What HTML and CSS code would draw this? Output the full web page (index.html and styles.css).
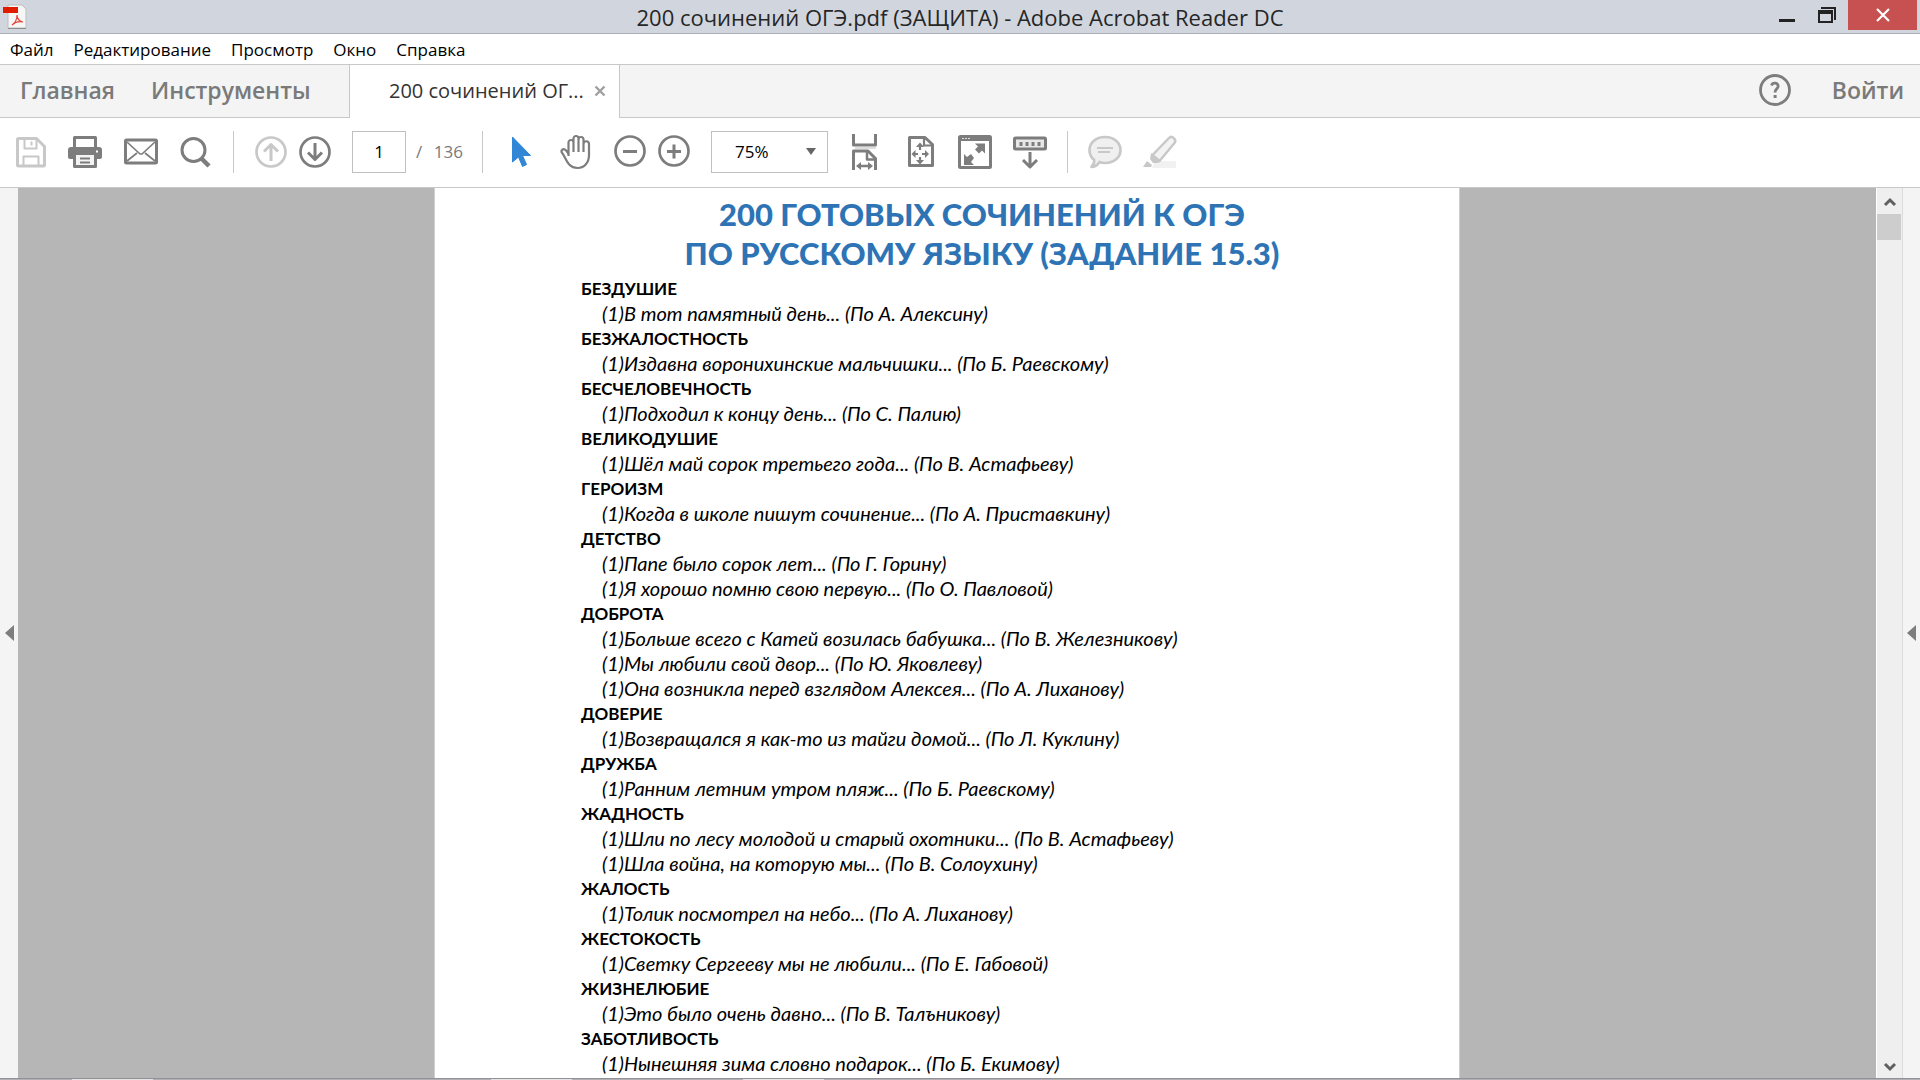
FILE: index.html
```html
<!DOCTYPE html>
<html lang="ru">
<head>
<meta charset="utf-8">
<title>200 сочинений ОГЭ.pdf (ЗАЩИТА) - Adobe Acrobat Reader DC</title>
<meta name="viewport" content="width=device-width, initial-scale=1">
<link rel="stylesheet" href="styles.css">
</head>
<body>
<div class="window">
  <header class="titlebar">
    <svg class="app-icon" viewBox="0 0 24 26" aria-hidden="true">
      <path d="M5 1h14l4 4v19H5z" fill="#f6f6f6" stroke="#bdbdbd"/>
      <path d="M5 24.500h18" stroke="#8d8d8d"/>
      <path d="M0 3h15v6H0z" fill="#e01b00"/>
      <path d="M9 21c3-2 5-6 5-10 0 4 3 7 6 7-4-1-8 0-11 3z" fill="none" stroke="#e5483a" stroke-width="1.200"/>
    </svg>
    <h1 class="window-title">200 сочинений ОГЭ.pdf (ЗАЩИТА) - Adobe Acrobat Reader DC</h1>
    <div class="window-controls">
      <button class="win-btn" aria-label="Свернуть"><svg width="20" height="24" viewBox="0 0 20 24"><path d="M2 19h16v3H2z" fill="#222"/></svg></button>
      <button class="win-btn" aria-label="Свернуть в окно"><svg width="20" height="24" viewBox="0 0 20 24"><path d="M4 7h15v13h-2V9H4z" fill="#222"/><path d="M1 10h15v13H1zM3 14v7h11v-7z" fill="#222" fill-rule="evenodd"/></svg></button>
      <button class="win-btn close" aria-label="Закрыть"><svg width="16" height="14" viewBox="0 0 16 14"><path d="M2 1l12 12M14 1L2 13" stroke="#fff" stroke-width="2.200"/></svg></button>
    </div>
  </header>

  <nav class="menubar" aria-label="Меню">
    <button>Файл</button>
    <button>Редактирование</button>
    <button>Просмотр</button>
    <button>Окно</button>
    <button>Справка</button>
  </nav>

  <div class="tabbar">
    <div class="main-tabs">
      <button class="main-tab">Главная</button>
      <button class="main-tab">Инструменты</button>
    </div>
    <div class="doc-tab">
      <span class="doc-name">200 сочинений ОГ...</span>
      <button class="tab-close" aria-label="Закрыть вкладку"><svg width="12" height="12" viewBox="0 0 12 12"><path d="M1.500 1.500l9 9M10.500 1.500l-9 9" stroke="#a0a0a0" stroke-width="2.400"/></svg></button>
    </div>
    <div class="account">
      <button class="help" aria-label="Справка"><svg width="32" height="32" viewBox="0 0 32 32" fill="none" stroke="#7d7d7d"><circle cx="16" cy="16" r="14.500" stroke-width="2.800"/><path d="M12.500 11.500c1-3.500 7.500-3 6.500 1.300-.6 2.300-3 2.600-3 5.700" stroke-width="2.800"/><path d="M14.600 21h3v3h-3z" fill="#7d7d7d" stroke="none"/></svg></button>
      <a class="login" href="#">Войти</a>
    </div>
  </div>

  <div class="toolbar" role="toolbar" aria-label="Инструменты документа">
    <button class="tool pale" aria-label="Сохранить"><svg viewBox="0 0 36 36"><path d="M5 4.500h18.500l8 8V31a1 1 0 0 1-1 1h-25a1 1 0 0 1-1-1V5.500a1 1 0 0 1 1-1z" stroke-width="3"/><path d="M11.500 5v9.500h12V5M18.500 7.500v4M10.500 32v-9.500h15V32" stroke-width="2"/></svg></button>
    <button class="tool" aria-label="Печать"><svg viewBox="0 0 36 36"><path d="M3 13h28a3 3 0 0 1 3 3v7a2 2 0 0 1-2 2H2a2 2 0 0 1-2-2v-7a3 3 0 0 1 3-3z" class="solid"/><path d="M6.500 13V3.500h21V13" stroke-width="3" fill="#fff"/><path d="M6.500 19.500h21v13h-21z" stroke-width="3" fill="#f4f4f4"/><path d="M12 24.500h10M12 28.500h10" stroke-width="2"/><path d="M28 16.500h2v2h-2z" fill="#fff" stroke="none"/></svg></button>
    <button class="tool" aria-label="Отправить"><svg viewBox="0 0 36 36"><rect x="2.500" y="6" width="31" height="23" rx="1" stroke-width="3"/><path d="M4 8l13 12h2L32 8M4 27l10-8M32 27l-10-8" stroke-width="1.700"/></svg></button>
    <button class="tool" aria-label="Найти"><svg viewBox="0 0 36 36"><circle cx="15.500" cy="16" r="11.500" stroke-width="3"/><path d="M23.500 24.500l7.500 7.500" stroke-width="4.500"/></svg></button>
    <span class="divider"></span>
    <div class="tool-pair">
      <button class="tool pale" aria-label="Предыдущая страница"><svg viewBox="0 0 36 36"><circle cx="18" cy="18" r="14.500" stroke-width="2.700"/><path d="M18 27V11M11 17.500l7-7 7 7" stroke-width="3"/></svg></button>
      <button class="tool" aria-label="Следующая страница"><svg viewBox="0 0 36 36"><circle cx="18" cy="18" r="14.500" stroke-width="2.700"/><path d="M18 9v16M11 18.500l7 7 7-7" stroke-width="3"/></svg></button>
    </div>
    <div class="page-nav">
      <input class="page-number" type="text" value="1" aria-label="Номер страницы">
      <span class="slash">/</span>
      <span class="page-total">136</span>
    </div>
    <span class="divider"></span>
    <button class="tool" aria-label="Выбор"><svg viewBox="0 0 36 36"><path d="M10.500 3v25l6-5 4 9.500 4-2-4-9H28.500z" fill="#3186d6" stroke="#3186d6" stroke-width="1"/></svg></button>
    <button class="tool" aria-label="Рука"><svg viewBox="0 0 36 36"><path d="M9.500 22V8.500a2.500 2.500 0 0 1 5 0V18M14.500 17V4.500a2.500 2.500 0 0 1 5 0V18M19.500 17V5.500a2.500 2.500 0 0 1 5 0V18M24.500 18V10a2.700 2.700 0 0 1 5.500 0V21c0 8-5 13-11.500 13-9 0-11-8-14-13-2-3-3-4-1-5.500 2.500-1.500 5 2.500 6.500 5.500" stroke-width="2.200" transform="translate(2 0)"/></svg></button>
    <div class="tool-pair">
      <button class="tool" aria-label="Уменьшить"><svg viewBox="0 0 36 36"><circle cx="18" cy="17" r="14.500" stroke-width="2.700"/><path d="M11 17.500h14" stroke-width="3"/></svg></button>
      <button class="tool" aria-label="Увеличить"><svg viewBox="0 0 36 36"><circle cx="18" cy="17" r="14.500" stroke-width="2.700"/><path d="M11 17.500h14M18 10.500v14" stroke-width="3"/></svg></button>
    </div>
    <label class="zoom">
      <select aria-label="Масштаб"><option>75%</option></select>
      <svg width="10" height="7" viewBox="0 0 10 7"><path d="M0 0h10L5 7z" fill="#666"/></svg>
    </label>
    <button class="tool" aria-label="По ширине"><svg viewBox="0 0 36 36"><path d="M6.500 0v11h22V0" stroke-width="3"/><path d="M8 14h21" stroke="#dedede" stroke-width="2"/><path d="M6.500 36V17H21l7.500 7.500V36" stroke-width="3"/><path d="M20 17v8.500h8M11 32h13" stroke-width="2.500"/><path d="M9 32l5-4v8zM26 32l-5-4v8z" class="solid"/></svg></button>
    <button class="tool" aria-label="По размеру страницы"><svg viewBox="0 0 36 36"><path d="M7.500 3.500H23l7.500 7V31.500h-23z" stroke-width="3"/><path d="M22 4v7.500h8M18 12v4M18 23v4M12 20h4M20 20h4" stroke-width="2.200"/><path d="M18 8.500l4 4.500h-8zM18 30.500l4-4.500h-8zM9.500 20l4-4v8zM27 20l-4-4v8z" class="solid"/></svg></button>
    <button class="tool" aria-label="Во весь экран"><svg viewBox="0 0 36 36"><rect x="2.500" y="2.500" width="31" height="31" rx="1" stroke-width="3"/><path d="M2 2h32v5H2z" class="solid"/><path d="M5 4.500h9" stroke="#ddd" stroke-dasharray="2 1"/><path d="M18 9.500h10v10l-3-3-3 3-4-4 3-3zM7 31V20l3 3 4-3 3 4-3 4 3 3z" class="solid"/></svg></button>
    <button class="tool" aria-label="Режим чтения"><svg viewBox="0 0 36 36"><rect x="2.500" y="4" width="31" height="11" rx="1" stroke-width="3" fill="#e8e8e8"/><path d="M7.500 8h3v4h-3zM13.500 8h3v4h-3zM19.500 8h3v4h-3zM25.500 8h3v4h-3z" class="solid"/><path d="M18 18v14M11 26l7 7 7-7" stroke-width="3"/></svg></button>
    <span class="divider"></span>
    <button class="tool pale" aria-label="Комментарий"><svg viewBox="0 0 36 36"><path d="M18 3c9 0 15.500 5.500 15.500 13S27 29 18 29c-2 0-4-.3-5.500-1-2 3-4.500 5-8 5 2-2 3-4 2.700-7C4 23.500 2.500 20 2.500 16 2.500 8.500 9 3 18 3z" fill="#f0f0f0" stroke-width="2.700"/><path d="M10 14h16M11 18h12" stroke-width="1.800"/></svg></button>
    <button class="tool pale" aria-label="Маркер"><svg viewBox="0 0 36 36"><path d="M13 27h21v7H10z" fill="#f1f1f1" stroke="none"/><path d="M10.500 21L27 4c3-3 8 1.500 5.500 5L17.500 27z" fill="#f3f3f3" stroke-width="2.500"/><path d="M9 19l10 8-3 2h-5l-3-4zM5 27l5 4-1 2H1z" class="solid"/></svg></button>
  </div>

  <main class="viewer">
    <button class="side-panel" aria-label="Панель навигации"><svg width="9" height="16" viewBox="0 0 9 16"><path d="M9 0v16L0 8z" fill="#7d7d7d"/></svg></button>
    <div class="canvas">
      <article class="page">
        <h2 class="doc-title">200 ГОТОВЫХ СОЧИНЕНИЙ К ОГЭ<br>ПО РУССКОМУ ЯЗЫКУ (ЗАДАНИЕ 15.3)</h2>
        <h3>БЕЗДУШИЕ</h3>
        <p>(1)В тот памятный день... (По А. Алексину)</p>
        <h3>БЕЗЖАЛОСТНОСТЬ</h3>
        <p>(1)Издавна воронихинские мальчишки... (По Б. Раевскому)</p>
        <h3>БЕСЧЕЛОВЕЧНОСТЬ</h3>
        <p>(1)Подходил к концу день... (По С. Палию)</p>
        <h3>ВЕЛИКОДУШИЕ</h3>
        <p>(1)Шёл май сорок третьего года... (По В. Астафьеву)</p>
        <h3>ГЕРОИЗМ</h3>
        <p>(1)Когда в школе пишут сочинение... (По А. Приставкину)</p>
        <h3>ДЕТСТВО</h3>
        <p>(1)Папе было сорок лет... (По Г. Горину)</p>
        <p>(1)Я хорошо помню свою первую... (По О. Павловой)</p>
        <h3>ДОБРОТА</h3>
        <p>(1)Больше всего с Катей возилась бабушка... (По В. Железникову)</p>
        <p>(1)Мы любили свой двор... (По Ю. Яковлеву)</p>
        <p>(1)Она возникла перед взглядом Алексея... (По А. Лиханову)</p>
        <h3>ДОВЕРИЕ</h3>
        <p>(1)Возвращался я как-то из тайги домой... (По Л. Куклину)</p>
        <h3>ДРУЖБА</h3>
        <p>(1)Ранним летним утром пляж... (По Б. Раевскому)</p>
        <h3>ЖАДНОСТЬ</h3>
        <p>(1)Шли по лесу молодой и старый охотники... (По В. Астафьеву)</p>
        <p>(1)Шла война, на которую мы... (По В. Солоухину)</p>
        <h3>ЖАЛОСТЬ</h3>
        <p>(1)Толик посмотрел на небо... (По А. Лиханову)</p>
        <h3>ЖЕСТОКОСТЬ</h3>
        <p>(1)Светку Сергееву мы не любили... (По Е. Габовой)</p>
        <h3>ЖИЗНЕЛЮБИЕ</h3>
        <p>(1)Это было очень давно... (По В. Талъникову)</p>
        <h3>ЗАБОТЛИВОСТЬ</h3>
        <p>(1)Нынешняя зима словно подарок... (По Б. Екимову)</p>
      </article>
    </div>
    <div class="scrollbar">
      <button aria-label="Вверх"><svg width="14" height="10" viewBox="0 0 14 10"><path d="M2 8l5-5 5 5" fill="none" stroke="#606060" stroke-width="3"/></svg></button>
      <div class="thumb"></div>
      <button class="down" aria-label="Вниз"><svg width="14" height="10" viewBox="0 0 14 10"><path d="M2 2l5 5 5-5" fill="none" stroke="#606060" stroke-width="3"/></svg></button>
    </div>
    <button class="side-panel right" aria-label="Панель инструментов"><svg width="9" height="16" viewBox="0 0 9 16"><path d="M9 0v16L0 8z" fill="#7d7d7d"/></svg></button>
  </main>
  <footer class="taskbar"><span></span><span></span><span></span></footer>
</div>
</body>
</html>
```
FILE: styles.css
```css
* { box-sizing: border-box; }

body {
  margin: 0;
  font-family: "Open Sans", "Noto Sans", sans-serif;
  font-size: 17px;
  color: #000;
}

button {
  margin: 0;
  padding: 0;
  border: 0;
  background: none;
  color: inherit;
  font: inherit;
}

svg { display: block; }

.window {
  display: flex;
  flex-direction: column;
  height: 100vh;
  overflow: hidden;
  background: #fff;
}

/* Title bar */
.titlebar {
  display: grid;
  grid-template-columns: 1fr auto 1fr;
  flex: none;
  height: 34px;
  padding: 0 3px;
  border-bottom: 1px solid #abaeb4;
  background: #d1d6de;
}

.app-icon { width: 24px; height: 26px; margin-top: 4px; }

.window-title {
  margin: 0;
  font-size: 22px;
  font-weight: 400;
  line-height: 34px;
  color: #262626;
}

.window-controls { display: flex; justify-content: flex-end; gap: 20px; }
.win-btn { height: 30px; }
.win-btn svg { margin-bottom: 6px; }
.close { display: grid; place-items: center; width: 69px; margin-left: -9px; background: #c75050; }
.close svg { margin: 0; }

/* Menu */
.menubar {
  display: flex;
  flex: none;
  gap: 20px;
  height: 31px;
  padding: 0 10px;
  border-bottom: 1px solid #c8c8c8;
}

/* Tabs */
.tabbar {
  display: flex;
  flex: none;
  height: 53px;
  color: #7a7a7a;
}

.main-tabs {
  display: flex;
  gap: 36px;
  width: 350px;
  padding: 0 0 2px 20px;
  border-right: 1px solid #c8c8c8;
  border-bottom: 1px solid #c8c8c8;
  background: #f4f4f4;
}

.main-tab, .login { font-size: 23px; font-weight: 600; }

.doc-tab {
  display: flex;
  align-items: center;
  justify-content: space-between;
  width: 269px;
  padding: 0 13px 2px 39px;
  font-size: 20px;
  color: #333;
}

.account {
  display: flex;
  flex: 1;
  align-items: center;
  justify-content: flex-end;
  gap: 41px;
  padding: 0 16px 2px 0;
  border-left: 1px solid #c8c8c8;
  border-bottom: 1px solid #c8c8c8;
  background: #f4f4f4;
}

.login { color: inherit; text-decoration: none; }

/* Toolbar */
.toolbar {
  display: flex;
  flex: none;
  align-items: center;
  gap: 19px;
  height: 70px;
  padding: 0 13px 2px;
  border-bottom: 1px solid #c8c8c8;
}

.tool { flex: none; width: 36px; height: 36px; color: #7d7d7d; }
.pale { color: #c8c8c8; }
.tool svg { width: 36px; height: 36px; fill: none; stroke: currentColor; stroke-linejoin: round; }
.tool .solid { fill: currentColor; stroke: none; }
.tool-pair { display: flex; gap: 8px; }
.divider { width: 1px; height: 42px; background: #c8c8c8; }

.page-nav { display: flex; align-items: center; gap: 10px; width: 111px; color: #7a7a7a; }

.page-number, .zoom select {
  height: 42px;
  border: 1px solid #c0c0c0;
  border-radius: 0;
  background: #fff;
  color: #000;
  font: inherit;
}

.page-number { width: 54px; padding: 0; text-align: center; }
.page-total { margin-left: auto; }

.zoom { display: grid; align-items: center; width: 117px; }
.zoom select { grid-area: 1 / 1; width: 100%; padding: 0 23px; appearance: none; }
.zoom svg { grid-area: 1 / 1; justify-self: end; margin-right: 12px; pointer-events: none; }

/* Document area */
.viewer { display: flex; flex: 1; min-height: 0; }

.side-panel {
  display: grid;
  place-items: center;
  flex: none;
  width: 18px;
  background: #f4f4f4;
}

.side-panel.right { border-left: 1px solid #dcdcdc; }

.canvas {
  display: flex;
  flex: 1;
  justify-content: center;
  overflow: hidden;
  background: #b6b6b6;
}

.page {
  flex: 0 1 1026px;
  padding: 7px 76px 0 146px;
  border: solid #cfcfcf;
  border-width: 0 1px;
  background: #fff;
  font-family: Lato, "Open Sans", sans-serif;
  line-height: 25px;
}

.doc-title {
  margin: 0 0 3px;
  font-size: 31px;
  font-weight: 900;
  line-height: 39px;
  text-align: center;
  color: #2e74b5;
}

.page h3, .page p { margin: 0; white-space: nowrap; }
.page h3 { font-size: 17px; }
.page p { padding-left: 21px; font-size: 20px; font-style: italic; }

.scrollbar {
  display: flex;
  flex-direction: column;
  flex: none;
  width: 26px;
  border-left: 1px solid #fff;
  background: #efefef;
}

.scrollbar button { display: grid; place-items: center; height: 26px; padding-top: 2px; }
.scrollbar .down { margin-top: auto; padding-top: 4px; }
.thumb { width: 24px; height: 26px; background: #cdcdcd; }

.taskbar {
  display: flex;
  flex: none;
  height: 2px;
  padding-left: 72px;
  border-top: 1px solid #929296;
  background: #b0b0b5;
}

.taskbar span { width: 81px; background: #e4e4e4; }
.taskbar span:nth-child(2) { margin-left: 338px; }
.taskbar span:nth-child(3) { margin-left: 171px; }
```
